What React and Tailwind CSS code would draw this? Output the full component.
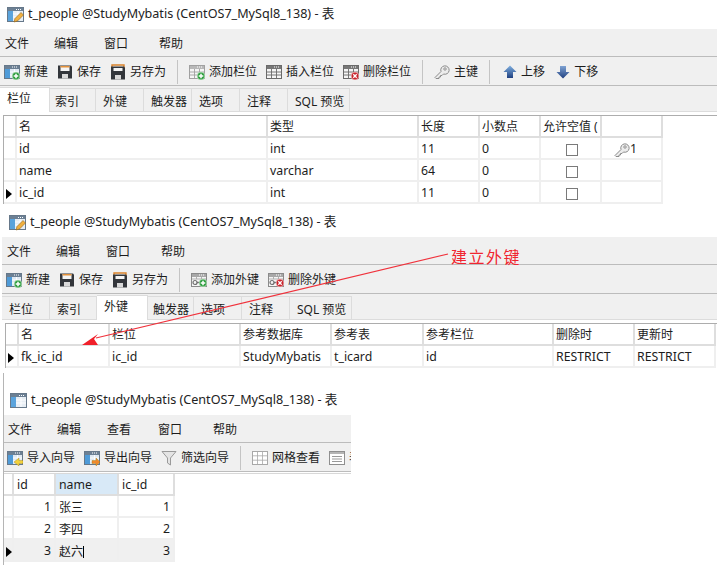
import React from 'react'

function Plus({ x = 12, y = 12 }) {
  return (
    <g>
      <circle cx={x} cy={y} r="3.9" fill="#2e9e3f" stroke="#e8f5e8" strokeWidth="0.6" />
      <path d={`M${x - 2.3} ${y}h4.6M${x} ${y - 2.3}v4.6`} stroke="#fff" strokeWidth="1.5" />
    </g>
  )
}

function Cross({ x = 12, y = 12 }) {
  return (
    <g>
      <circle cx={x} cy={y} r="3.9" fill="#c9242c" stroke="#f8e0e0" strokeWidth="0.6" />
      <path d={`M${x - 1.7} ${y - 1.7}l3.4 3.4M${x + 1.7} ${y - 1.7}l-3.4 3.4`} stroke="#fff" strokeWidth="1.3" />
    </g>
  )
}

function Dots({ color = '#fff' }) {
  return <path d="M8 3h1M10 3h1M12 3h1" stroke={color} strokeWidth="1" />
}

function BlueTable({ children }) {
  return (
    <svg className="shrink-0" width="16" height="16" viewBox="0 0 16 16">
      <rect x="0.5" y="1.5" width="15" height="13" fill="#dfe9f3" stroke="#66788a" />
      <rect x="1" y="2" width="14" height="3" fill="#6c8094" />
      <rect x="1" y="5" width="5" height="9" fill="#4f9bd8" />
      <Dots />
      <path d="M6 8h9M6 11h9M10.5 5v9" stroke="#fff" strokeWidth="0.9" />
      {children}
    </svg>
  )
}

function Floppy({ back }) {
  return (
    <svg className="shrink-0" width="16" height="16" viewBox="0 0 16 16">
      {back && <path d="M2 4V1h12v3" fill="none" stroke="#d9822b" strokeWidth="1.4" />}
      <g transform={back ? 'translate(1 1.5)' : 'translate(1 0.5)'}>
        <path d="M0 1h13l1 1v12H0z" fill="#33363b" />
        <rect x="2.5" y={back ? 2.5 : 1.5} width="9" height={back ? 3 : 5} fill="#f5f5f5" />
        {!back && <rect x="2.5" y="1.5" width="9" height="1.5" fill="#e3913b" />}
        <rect x="4" y="9.5" width="6" height="4.5" fill="#d9d9d9" />
      </g>
    </svg>
  )
}

function GrayTable({ tone = 'gray', children }) {
  const line = tone === 'gray' ? '#a0a0a0' : '#6a6a6a'
  return (
    <svg className="shrink-0" width="16" height="16" viewBox="0 0 16 16">
      <rect x="0.5" y="1.5" width="15" height="13" fill="#f5f5f5" stroke={line} />
      <rect x="1" y="2" width="14" height="3" fill={tone === 'gray' ? '#b8b8b8' : '#777'} />
      <Dots />
      <path d="M1 8h14M1 11h14M5.5 5v9M10.5 5v9" stroke={line} strokeWidth="0.9" />
      {children}
    </svg>
  )
}

function KeyTable({ children }) {
  return (
    <svg className="shrink-0" width="16" height="16" viewBox="0 0 16 16">
      <rect x="0.5" y="1.5" width="15" height="13" fill="#f5f5f5" stroke="#8a8a8a" />
      <rect x="1" y="2" width="14" height="3" fill="#a8a8a8" />
      <Dots />
      <path d="M1 7h14M5.5 5v2M10.5 5v2" stroke="#a8a8a8" strokeWidth="0.9" />
      <circle cx="4" cy="10.5" r="2" fill="none" stroke="#6f6f6f" strokeWidth="1.2" />
      <path d="M6 10.5h4" stroke="#6f6f6f" strokeWidth="1.4" />
      {children}
    </svg>
  )
}

function KeyIcon() {
  return (
    <svg className="shrink-0" width="16" height="16" viewBox="0 0 16 16" fill="#ececec" stroke="#8b8b8b" strokeWidth="1">
      <path d="M1 13.5L7 7.5a4.2 4.2 0 1 1 2.5 2.5L8 11.5H6.5V13H5v1.5H2L1 13.5z" strokeLinejoin="round" />
      <circle cx="11" cy="5" r="1.2" fill="#fff" />
    </svg>
  )
}

function ArrowIcon({ down }) {
  const id = down ? 'arrowDown' : 'arrowUp'
  return (
    <svg className="shrink-0" width="14" height="14" viewBox="0 0 14 14">
      <defs>
        <linearGradient id={id} x1="0" y1="0" x2="0" y2="1">
          <stop offset="0" stopColor={down ? '#7fa3d3' : '#7fb0e0'} />
          <stop offset="1" stopColor="#1f3f80" />
        </linearGradient>
      </defs>
      <path
        d={down ? 'M4 1h6v6h3.5L7 13.5.5 7H4z' : 'M7 .5L13.5 7H10v6H4V7H.5z'}
        fill={`url(#${id})`}
      />
    </svg>
  )
}

function WizardIcon({ color, left }) {
  return (
    <BlueTable>
      <path
        d={left ? 'M16 10.5h-4V8l-5 4 5 4v-2.5h4z' : 'M8 10.5h4V8l4 4-4 4v-2.5H8z'}
        fill={color}
        stroke="#9a7a10"
        strokeWidth="0.4"
      />
    </BlueTable>
  )
}

function FilterIcon() {
  return (
    <svg className="shrink-0" width="16" height="16" viewBox="0 0 16 16">
      <path d="M1 1.5h14L9.5 8v7l-3-2V8z" fill="#e4e4e4" stroke="#9a9a9a" />
    </svg>
  )
}

function GridIcon() {
  return (
    <svg className="shrink-0" width="16" height="16" viewBox="0 0 16 16">
      <rect x="0.5" y="1.5" width="15" height="13" fill="#fff" stroke="#a8a8a8" />
      <path d="M0.5 5.8h15M0.5 10.2h15M5.5 1.5v13M10.5 1.5v13" stroke="#a8a8a8" strokeWidth="0.8" />
    </svg>
  )
}

function FormIcon() {
  return (
    <svg className="shrink-0" width="16" height="16" viewBox="0 0 16 16">
      <rect x="0.5" y="1.5" width="15" height="13" fill="#fff" stroke="#8f8f8f" />
      <rect x="1" y="2" width="14" height="2" fill="#b5b5b5" />
      <path d="M3 6.5h10M3 9h10M3 11.5h10" stroke="#9a9a9a" />
    </svg>
  )
}

function TitleIcon({ pencil }) {
  return (
    <svg className="shrink-0" width="17" height="17" viewBox="0 0 17 17">
      <rect x="0.5" y="1.5" width="16" height="14" fill="#e6edf4" stroke="#66788a" />
      <rect x="1" y="2" width="15" height="3" fill="#6c8094" />
      <rect x="1" y="5" width="5" height="10" fill="#5aa3dc" />
      <path d="M9 3.5h1M11 3.5h1M13 3.5h1" stroke="#fff" />
      <path d="M6 8h10M6 11h10M11 5v10" stroke="#fff" strokeWidth="0.9" />
      {pencil && <path d="M7 16l1-3.5 6-6 2.5 2.5-6 6z" fill="#f0b040" stroke="#8b5f1a" strokeWidth="0.6" />}
    </svg>
  )
}

function Sep() {
  return <div className="mx-[11px] h-[24px] w-[1px] shrink-0 bg-[#c4c4c4]" />
}

function Tool({ icon, label, className = 'mr-[9px]' }) {
  return (
    <div className={`flex shrink-0 items-center gap-[4px] ${className}`}>
      {icon}
      <span className="whitespace-nowrap">{label}</span>
    </div>
  )
}

function Title({ className, pencil = true }) {
  return (
    <div className={`flex items-center gap-[4px] bg-white ${className}`}>
      <TitleIcon pencil={pencil} />
      <span className="whitespace-nowrap text-[12.6px] text-[#222]">t_people @StudyMybatis (CentOS7_MySql8_138) - 表</span>
    </div>
  )
}

function Menu({ items, className = '' }) {
  return (
    <div className={`flex h-[27px] shrink-0 items-center bg-[#f0f0f0] pt-[2px] text-[12px] ${className}`}>
      {items.map(([label, width]) => (
        <span key={label} className="shrink-0" style={{ width }}>
          {label}
        </span>
      ))}
    </div>
  )
}

function Toolbar({ children, className = '' }) {
  return (
    <div className={`flex h-[30px] shrink-0 items-center overflow-hidden border-y border-[#bcbcbc] bg-[#f0f0f0] pt-[1px] text-[12px] ${className}`}>
      {children}
    </div>
  )
}

function Tabs({ tabs, active }) {
  const activeIndex = tabs.findIndex(([label]) => label === active)
  return (
    <div className="flex h-[26px] shrink-0 items-end border-b border-[#dcdcdc] bg-[#f0f0f0] text-[12px]">
      {tabs.map(([label, width], i) =>
        i === activeIndex ? (
          <div
            key={label}
            className="relative z-10 mb-[-1px] flex h-[25px] shrink-0 items-start border-t border-r border-[#dcdcdc] bg-white pl-[7px] pt-[5px]"
            style={{ width }}
          >
            {label}
          </div>
        ) : (
          <div
            key={label}
            className={`flex h-[23px] shrink-0 items-center border-r border-t border-[#dcdcdc] pt-[3px] ${
              i === activeIndex + 1 ? 'pl-[5px]' : 'pl-[7px]'
            }`}
            style={{ width }}
          >
            {label}
          </div>
        ),
      )}
    </div>
  )
}

function Check() {
  return <div className="mx-auto h-[12px] w-[12px] border border-[#7a7a7a] bg-white" />
}

function Marker() {
  return <div className="h-0 w-0 border-y-[5px] border-l-[6px] border-y-transparent border-l-black" />
}

function Grid({ widths, header, rows, current, rowClass = '', renderCell, headerActive, headerClass = 'text-[12px]', padClass = 'pl-[2px]' }) {
  return (
    <div className="w-fit">
      <div className="flex h-[22px]">
        {header.map((label, i) => (
          <div
            key={i}
            className={`flex shrink-0 items-center overflow-hidden whitespace-nowrap border-r-2 border-b-2 border-[#dedede] pt-[2px] ${padClass} ${headerClass} ${
              headerActive === i ? 'bg-[#d8e9f7]' : ''
            }`}
            style={{ width: widths[i] }}
          >
            {label}
          </div>
        ))}
      </div>
      {rows.map((row, r) => (
        <div key={r} className={`flex h-[22px] ${current === r ? rowClass : ''}`}>
          {row.map((cell, i) => (
            <div
              key={i}
              className={`flex shrink-0 items-center whitespace-nowrap border-r-2 border-b-2 border-[#efefef] pt-[3px] ${i === 0 ? 'pl-[2px]' : padClass}`}
              style={{ width: widths[i] }}
            >
              {i === 0 && current === r ? <Marker /> : renderCell ? renderCell(cell, r, i) : cell}
            </div>
          ))}
        </div>
      ))}
    </div>
  )
}

function FileTools() {
  return (
    <>
      <Tool icon={<BlueTable><Plus /></BlueTable>} label="新建" />
      <Tool icon={<Floppy />} label="保存" />
      <Tool icon={<Floppy back />} label="另存为" className="" />
    </>
  )
}

export default function App() {
  return (
    <div className="relative h-[565px] w-[717px] overflow-hidden bg-white text-[12.3px] leading-none text-[#1c1c1c] [font-family:'Noto_Sans','Noto_Sans_CJK_SC',sans-serif]">
      {/* columns window */}
      <section className="h-[204px]">
        <Title className="h-[29px] pl-[7px]" />
        <Menu className="pl-[5px]" items={[['文件', 49], ['编辑', 50], ['窗口', 55], ['帮助', 50]]} />
        <Toolbar className="pl-[4px]">
          <FileTools />
          <Sep />
          <Tool icon={<GrayTable><Plus /></GrayTable>} label="添加栏位" />
          <Tool icon={<GrayTable tone="dark" />} label="插入栏位" />
          <Tool icon={<GrayTable tone="dark"><Cross /></GrayTable>} label="删除栏位" className="" />
          <Sep />
          <Tool icon={<KeyIcon />} label="主键" className="" />
          <Sep />
          <Tool icon={<ArrowIcon />} label="上移" className="ml-[2px] mr-[11px]" />
          <Tool icon={<ArrowIcon down />} label="下移" />
        </Toolbar>
        <Tabs
          active="栏位"
          tabs={[['栏位', 50], ['索引', 46], ['外键', 48], ['触发器', 48], ['选项', 48], ['注释', 48], ['SQL 预览', 62]]}
        />
        <div className="ml-[3px] mt-[3px] border-t border-l border-[#adadad]">
          <Grid
            widths={[13, 251, 151, 61, 61, 61, 61]}
            header={['', '名', '类型', '长度', '小数点', '允许空值 (', '']}
            current={2}
            rows={[
              ['', 'id', 'int', '11', '0', 'check', 'key'],
              ['', 'name', 'varchar', '64', '0', 'check', ''],
              ['', 'ic_id', 'int', '11', '0', 'check', ''],
            ]}
            renderCell={(cell) => {
              if (cell === 'check') return <Check />
              if (cell === 'key') {
                return (
                  <span className="ml-[10px] flex items-center">
                    <KeyIcon />
                    1
                  </span>
                )
              }
              return cell
            }}
          />
        </div>
      </section>

      {/* foreign keys window */}
      <section className="ml-[2px] h-[164px]">
        <Title className="h-[33px] pl-[7px] pt-[3px]" />
        <Menu className="pl-[5px]" items={[['文件', 49], ['编辑', 50], ['窗口', 55], ['帮助', 50]]} />
        <Toolbar className="pl-[4px]">
          <FileTools />
          <Sep />
          <Tool icon={<KeyTable><Plus x={12} y={11} /></KeyTable>} label="添加外键" />
          <Tool icon={<KeyTable><Cross x={12} y={11} /></KeyTable>} label="删除外键" />
        </Toolbar>
        <Tabs
          active="外键"
          tabs={[['栏位', 48], ['索引', 47], ['外键', 51], ['触发器', 46], ['选项', 48], ['注释', 48], ['SQL 预览', 62]]}
        />
        <div className="ml-[3px] mt-[3px] border-t border-l border-[#adadad]">
          <Grid
            widths={[13, 91, 131, 91, 92, 130, 81, 81]}
            header={['', '名', '栏位', '参考数据库', '参考表', '参考栏位', '删除时', '更新时']}
            current={0}
            rows={[['', 'fk_ic_id', 'ic_id', 'StudyMybatis', 't_icard', 'id', 'RESTRICT', 'RESTRICT']]}
          />
        </div>
      </section>

      {/* data window */}
      <section className="ml-[3px] mt-[5px] h-[192px] w-[348px] overflow-hidden border-l border-[#b5b5b5]">
        <Title className="h-[42px] pl-[6px] pt-[12px]" pencil={false} />
        <Menu className="pl-[4px]" items={[['文件', 49], ['编辑', 50], ['查看', 51], ['窗口', 55], ['帮助', 50]]} />
        <Toolbar className="pl-[3px]">
          <Tool icon={<WizardIcon color="#f2d13c" left />} label="导入向导" />
          <Tool icon={<WizardIcon color="#f0892b" />} label="导出向导" />
          <Tool icon={<FilterIcon />} label="筛选向导" className="" />
          <Sep />
          <Tool icon={<GridIcon />} label="网格查看" />
          <Tool icon={<FormIcon />} label="表单查看" />
        </Toolbar>
        <div className="mt-[1px] border-t border-[#d8d8d8]">
          <Grid
            widths={[10, 42, 63, 56]}
            header={['', 'id', 'name', 'ic_id']}
            headerClass=""
            headerActive={2}
            current={2}
            padClass="pl-[3px]"
            rowClass="bg-[#f0f0f0]"
            rows={[
              ['', '1', '张三', '1'],
              ['', '2', '李四', '2'],
              ['', '3', '赵六', '3'],
            ]}
            renderCell={(cell, r, i) => {
              if (i === 1 || i === 3) return <span className="ml-auto pr-[3px]">{cell}</span>
              if (r === 2 && i === 2) return <span className="border-r border-black text-[12px]">{cell}</span>
              if (i === 2) return <span className="text-[12px]">{cell}</span>
              return cell
            }}
          />
        </div>
      </section>

      {/* red annotation over the screenshots */}
      <svg className="pointer-events-none absolute left-0 top-0" width="717" height="565">
        <path d="M448 254L96 338" stroke="#f0323c" strokeWidth="1.2" fill="none" />
        <path d="M82 345L98 334L94 339L98 345z" fill="#f0202a" />
      </svg>
      <span className="absolute left-[451px] top-[249px] text-[16px] tracking-[1.5px] text-[#f0252f]">建立外键</span>
    </div>
  )
}
